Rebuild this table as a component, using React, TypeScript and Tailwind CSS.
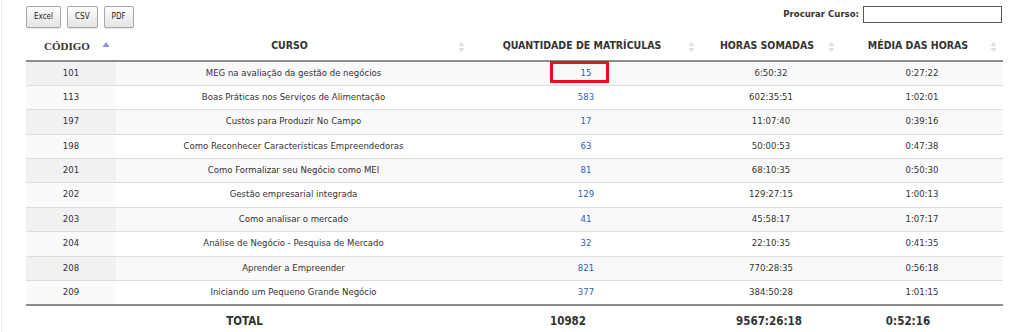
import React from 'react';

type Row = { cod: string; curso: string; qtd: string; horas: string; media: string };

const rows: Row[] = [
  { cod: '101', curso: 'MEG na avaliação da gestão de negócios', qtd: '15', horas: '6:50:32', media: '0:27:22' },
  { cod: '113', curso: 'Boas Práticas nos Serviços de Alimentação', qtd: '583', horas: '602:35:51', media: '1:02:01' },
  { cod: '197', curso: 'Custos para Produzir No Campo', qtd: '17', horas: '11:07:40', media: '0:39:16' },
  { cod: '198', curso: 'Como Reconhecer Características Empreendedoras', qtd: '63', horas: '50:00:53', media: '0:47:38' },
  { cod: '201', curso: 'Como Formalizar seu Negócio como MEI', qtd: '81', horas: '68:10:35', media: '0:50:30' },
  { cod: '202', curso: 'Gestão empresarial integrada', qtd: '129', horas: '129:27:15', media: '1:00:13' },
  { cod: '203', curso: 'Como analisar o mercado', qtd: '41', horas: '45:58:17', media: '1:07:17' },
  { cod: '204', curso: 'Análise de Negócio - Pesquisa de Mercado', qtd: '32', horas: '22:10:35', media: '0:41:35' },
  { cod: '208', curso: 'Aprender a Empreender', qtd: '821', horas: '770:28:35', media: '0:56:18' },
  { cod: '209', curso: 'Iniciando um Pequeno Grande Negócio', qtd: '377', horas: '384:50:28', media: '1:01:15' },
];

// row pitch in the screenshot alternates 24/25px
const tall = [false, false, true, false, false, true, false, true, false, true];

const SortBoth = () => (
  <svg width="7" height="13" viewBox="0 0 7 13" className="absolute right-[6px] top-1/2 -translate-y-1/2">
    <path d="M3.5 1 L6.5 5.5 H0.5 Z" fill="#e0e0e0" />
    <path d="M3.5 12 L6.5 7.5 H0.5 Z" fill="#e0e0e0" />
  </svg>
);

const SortAsc = () => (
  <svg width="8" height="13" viewBox="0 0 8 13" className="absolute right-[6px] top-1/2 -translate-y-1/2">
    <path d="M4 1.5 L7.5 6.5 H0.5 Z" fill="#8a8fd8" />
  </svg>
);

const Btn = ({ label }: { label: string }) => (
  <button className="h-[22px] px-[7px] text-[8px] text-[#222] border border-[#a8a8a8] rounded-[2px] bg-gradient-to-b from-[#fdfdfd] to-[#e4e4e4] shadow-[0_1px_1px_rgba(0,0,0,0.1)]">
    {label}
  </button>
);

export default function App() {
  const font = { fontFamily: '"DejaVu Sans Condensed", Tahoma, "Liberation Sans", sans-serif' };
  return (
    <div className="w-[1024px] h-[332px] bg-white overflow-hidden" style={font}>
      <div className="h-full ml-[1px] border-l border-[#eeeeee] pl-[24px] pr-[22px]">
        <div className="flex items-start justify-between pt-[6px] h-[34px]">
          <div className="flex gap-[6px]">
            <Btn label="Excel" />
            <Btn label="CSV" />
            <Btn label="PDF" />
          </div>
          <label className="flex items-center gap-[4px] text-[9.5px] font-bold text-[#333]">
            Procurar Curso:
            <input className="w-[139px] h-[17px] border border-[#555] bg-white outline-none" />
          </label>
        </div>
        <table className="w-[977px] table-fixed border-collapse text-[9.5px] text-[#333]">
          <colgroup>
            <col className="w-[90px]" />
            <col className="w-[355px]" />
            <col className="w-[230px]" />
            <col className="w-[140px]" />
            <col className="w-[162px]" />
          </colgroup>
          <thead>
            <tr className="h-[27px] border-b-2 border-[#8c8c8c] font-bold text-[10.5px]">
              <th className="relative pl-[10px] pr-[18px] pb-[2px] text-center" style={{ fontFamily: '"Liberation Serif", serif', fontSize: '11px' }}>
                CÓDIGO
                <SortAsc />
              </th>
              <th className="relative pl-[10px] pr-[18px] pb-[2px] text-center">CURSO<SortBoth /></th>
              <th className="relative pl-[10px] pr-[18px] pb-[2px] text-center">QUANTIDADE DE MATRÍCULAS<SortBoth /></th>
              <th className="relative pl-[10px] pr-[18px] pb-[2px] text-center">HORAS SOMADAS<SortBoth /></th>
              <th className="relative pl-[10px] pr-[18px] pb-[2px] text-center">MÉDIA DAS HORAS<SortBoth /></th>
            </tr>
          </thead>
          <tbody>
            {rows.map((r, i) => {
              const odd = i % 2 === 0;
              return (
                <tr
                  key={r.cod}
                  className={`${tall[i] ? 'h-[25px]' : 'h-[24px]'} border-b border-[#dddddd] ${odd ? 'bg-[#f9f9f9]' : 'bg-white'}`}
                >
                  <td className={`text-center ${odd ? 'bg-[#f1f1f1]' : 'bg-[#fafafa]'}`}>{r.cod}</td>
                  <td className="text-center">{r.curso}</td>
                  <td className="relative text-center text-[#2f5fb3]">
                    {r.qtd}
                    {i === 0 && (
                      <div className="absolute left-[79px] top-[-1px] w-[59px] h-[22px] border-[3px] border-[#e3141d]" />
                    )}
                  </td>
                  <td className="text-center">{r.horas}</td>
                  <td className="text-center">{r.media}</td>
                </tr>
              );
            })}
          </tbody>
          <tfoot>
            <tr className="h-[30px] border-t-2 border-[#8c8c8c] font-bold text-[11.5px] text-[#333]">
              <th colSpan={2} className="pl-[10px] pr-[18px] pt-[3px] text-center">TOTAL</th>
              <th className="pl-[0px] pr-[36px] pt-[3px] text-center">10982</th>
              <th className="pl-[10px] pr-[14px] pt-[3px] text-center">9567:26:18</th>
              <th className="pl-[0px] pr-[28px] pt-[3px] text-center">0:52:16</th>
            </tr>
          </tfoot>
        </table>
      </div>
    </div>
  );
}
